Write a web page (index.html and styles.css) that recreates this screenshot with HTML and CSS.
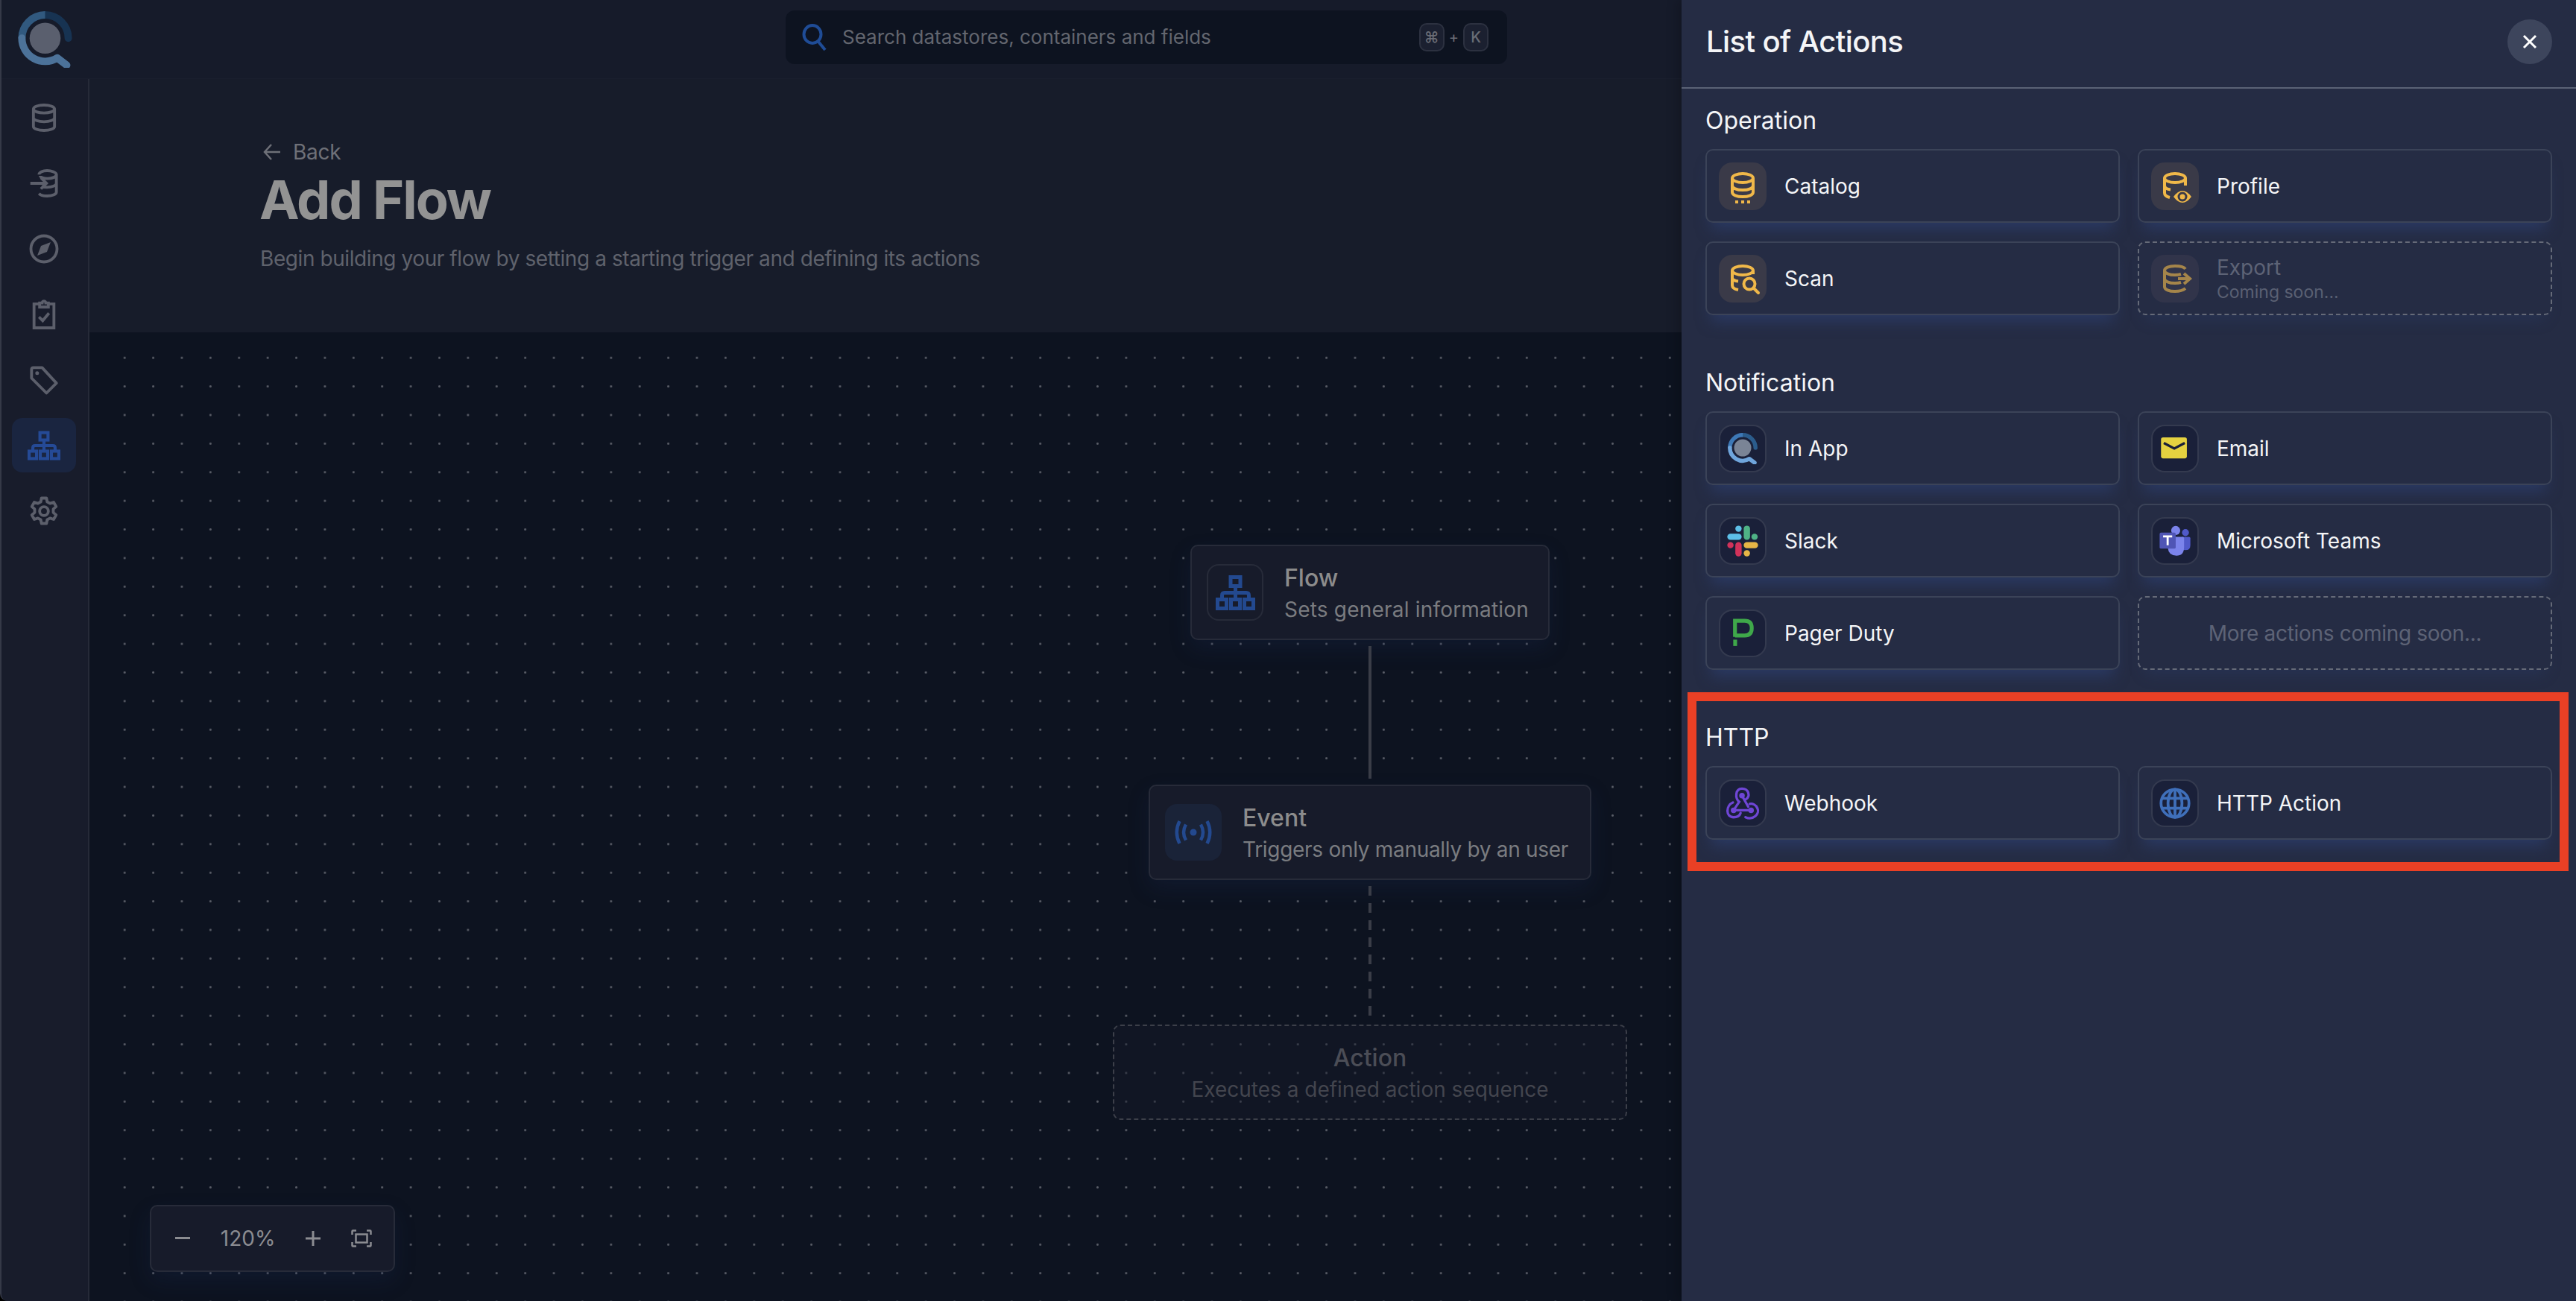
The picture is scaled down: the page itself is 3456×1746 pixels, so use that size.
FILE: index.html
```html
<!DOCTYPE html>
<html lang="en">
<head>
  <meta charset="UTF-8">
  <meta name="viewport" content="width=device-width, initial-scale=1.0">
  <title>Add Flow</title>
  <link rel="stylesheet" href="styles.css">
</head>
<body>

  <!-- shared icons -->
  <svg class="sprite">
    <symbol id="logo" viewBox="0 0 40 42">
      <circle cx="20" cy="20" r="11.5" fill="var(--logo-disc)"/>
      <path d="M20 2.8A17.2 17.2 0 0 1 37.2 20" fill="none" stroke="var(--logo-dark)" stroke-width="5.5" stroke-linecap="round"/>
      <path d="M20 2.8A17.2 17.2 0 0 0 2.8 20" fill="none" stroke="var(--logo-mid)" stroke-width="5.5"/>
      <path d="M2.8 20A17.2 17.2 0 0 0 29 34.7L36 40" fill="none" stroke="var(--logo-light)" stroke-width="5.5" stroke-linecap="round" stroke-linejoin="round"/>
    </symbol>
    <symbol id="sitemap" viewBox="0 0 53 47">
      <g fill="none" stroke="currentColor" stroke-width="5">
        <rect x="20" y="2.500" width="13" height="12"/>
        <rect x="2.500" y="32.500" width="12" height="12"/>
        <rect x="20.500" y="32.500" width="12" height="12"/>
        <rect x="38.500" y="32.500" width="12" height="12"/>
        <path d="M26.500 14V33M8.500 33V27q0-3.500 3.500-3.500H41q3.500 0 3.500 3.500V33"/>
      </g>
    </symbol>
  </svg>

  <div class="app">
    <div class="main">
      <header class="topbar">
        <div class="logo-cell">
          <svg class="logo logo-dim" width="73" height="76"><use href="#logo"/></svg>
        </div>
        <div class="search">
          <svg class="search-icon" width="34" height="36" viewBox="0 0 34 36" fill="none" stroke="currentColor" stroke-width="4">
            <ellipse cx="14" cy="14" rx="11.5" ry="12"/>
            <path d="M22 24L31 35"/>
          </svg>
          <span class="search-text">Search datastores, containers and fields</span>
          <span class="keys"><kbd>⌘</kbd><span class="key-plus">+</span><kbd>K</kbd></span>
        </div>
      </header>

      <div class="body-row">
        <nav class="sidebar">
          <a class="nav-item">
            <svg width="40" height="40" viewBox="0 0 24 24" fill="none" stroke="currentColor" stroke-width="2.3"><ellipse cx="12" cy="5" rx="8.5" ry="3.2"/><path d="M3.5 5V19c0 1.8 3.8 3.2 8.5 3.2s8.500-1.400 8.500-3.200V5M3.500 12c0 1.800 3.800 3.200 8.500 3.200s8.500-1.400 8.500-3.200"/></svg>
          </a>
          <a class="nav-item">
            <svg width="40" height="40" viewBox="0 0 24 24" fill="none" stroke="currentColor" stroke-width="2.300"><path d="M8 5c0-1.800 3-3.200 6.500-3.200S22 3.200 22 5s-3.500 3.200-7 3.200S9 7 9 6M22 5V19c0 1.800-3.500 3.200-7.500 3.200-3 0-5.500-.8-6.500-2M22 12c0 1.800-3.500 3.200-7.500 3.200-2 0-3.500-.3-4.500-.8M1 12H14M9.500 7.500L14 12l-4.500 4.500"/></svg>
          </a>
          <a class="nav-item">
            <svg width="40" height="40" viewBox="0 0 24 24" fill="none" stroke="currentColor" stroke-width="2.300"><circle cx="12" cy="12" r="10.500"/><path d="M16.500 7.500L14 14l-6.500 2.500L10 10z" fill="currentColor" stroke-width="1"/></svg>
          </a>
          <a class="nav-item">
            <svg width="40" height="40" viewBox="0 0 24 24" fill="none" stroke="currentColor" stroke-width="2.300"><path d="M8.500 3.500H4V22.800H20V3.500H15.500M8.500 2.800H10.500a1.500 1.500 0 0 1 3 0H15.500V6H8.500zM8 14l3 3 5-6"/></svg>
          </a>
          <a class="nav-item">
            <svg width="40" height="40" viewBox="0 0 24 24" fill="none" stroke="currentColor" stroke-width="2.300"><path d="M2 3.500Q2 2 3.500 2H10.500L22 14.500 14 22.500 2 10.500z" stroke-linejoin="round"/><circle cx="6.500" cy="6.500" r="1" fill="currentColor" stroke-width="1"/></svg>
          </a>
          <a class="nav-item nav-active">
            <svg width="44" height="40"><use href="#sitemap"/></svg>
          </a>
          <a class="nav-item">
            <svg width="40" height="40" viewBox="0 0 24 24" fill="none" stroke="currentColor" stroke-width="2.300" stroke-linejoin="round"><path d="M10 1.500h4l.6 3 2.300 1.300 2.900-1 2 3.500-2.300 2v2.800l2.300 2-2 3.500-2.900-1-2.300 1.300-.6 3h-4l-.6-3-2.300-1.300-2.900 1-2-3.500 2.300-2v-2.800l-2.300-2 2-3.500 2.900 1 2.300-1.300z"/><circle cx="12" cy="12" r="3.500"/></svg>
          </a>
        </nav>

        <div class="content">
          <section class="page-head">
            <a class="back">
              <svg width="24" height="24" viewBox="0 0 24 24" fill="none" stroke="currentColor" stroke-width="2.500"><path d="M23 12H2M11 2L2 12l9 10"/></svg>
              Back
            </a>
            <h1 class="page-title">Add Flow</h1>
            <p class="page-sub">Begin building your flow by setting a starting trigger and defining its actions</p>
          </section>

          <section class="canvas">
            <div class="diagram">
              <div class="node node-flow">
                <div class="node-icon node-icon-line">
                  <svg width="53" height="47"><use href="#sitemap"/></svg>
                </div>
                <div>
                  <div class="node-title">Flow</div>
                  <div class="node-sub">Sets general information</div>
                </div>
              </div>
              <div class="connector"></div>
              <div class="node node-event">
                <div class="node-icon">
                  <svg width="50" height="34" viewBox="0 0 50 34" fill="none" stroke="currentColor" stroke-width="4.500">
                    <circle cx="25" cy="17" r="4.500" fill="currentColor" stroke="none"/>
                    <path d="M15 6.500Q9 17 15 27.500M35 6.500Q41 17 35 27.500M6.500 2Q-1 17 6.500 32M43.500 2Q51 17 43.500 32"/>
                  </svg>
                </div>
                <div>
                  <div class="node-title">Event</div>
                  <div class="node-sub">Triggers only manually by an user</div>
                </div>
              </div>
              <div class="connector connector-dashed"></div>
              <div class="node node-action">
                <div class="node-title">Action</div>
                <div class="node-sub">Executes a defined action sequence</div>
              </div>
            </div>

            <div class="zoom-ctl">
              <svg width="20" height="4"><rect width="20" height="3" fill="currentColor"/></svg>
              <span class="zoom-value">120%</span>
              <svg width="20" height="20" viewBox="0 0 20 20" fill="currentColor"><rect y="8.500" width="20" height="3"/><rect x="8.500" width="3" height="20"/></svg>
              <svg width="28" height="24" viewBox="0 0 28 24" fill="none" stroke="currentColor" stroke-width="2.500"><path d="M1.500 7V2.500q0-1 1-1H7M21 1.500h4.500q1 0 1 1V7M26.500 17v4.500q0 1-1 1H21M7 22.500H2.500q-1 0-1-1V17"/><rect x="6.500" y="6.500" width="15" height="11"/></svg>
            </div>
          </section>
        </div>
      </div>
    </div>

    <aside class="drawer">
      <div class="drawer-head">
        <h2 class="drawer-title">List of Actions</h2>
        <button class="close-btn">
          <svg width="20" height="20" viewBox="0 0 20 20" stroke="currentColor" stroke-width="3"><path d="M2 2L18 18M18 2L2 18"/></svg>
        </button>
      </div>

      <div class="drawer-body">
        <section class="group">
          <h3 class="group-title">Operation</h3>
          <div class="cards">
            <div class="card">
              <div class="tile tile-op">
                <svg width="64" height="64" viewBox="0 0 64 64" fill="none" stroke="#f0b849" stroke-width="4">
                  <ellipse cx="32" cy="21" rx="14" ry="6"/>
                  <path d="M18 21V40c0 3.500 6 6 14 6s14-2.500 14-6V21M18 31c0 3.500 6 6 14 6s14-2.500 14-6"/>
                  <path d="M22 53h4M30 53h4M38 53h4"/>
                </svg>
              </div>
              <span class="card-label">Catalog</span>
            </div>
            <div class="card">
              <div class="tile tile-op">
                <svg width="64" height="64" viewBox="0 0 64 64" fill="none" stroke="#f0b849" stroke-width="4">
                  <ellipse cx="32" cy="21" rx="14" ry="6"/>
                  <path d="M18 21V41c0 3 3 5 7 6M18 31c0 3 3 5 8 5.500M46 21V31"/>
                  <path d="M30 46Q42 30 54 46 42 62 30 46z" fill="#f0b849" stroke="none"/>
                  <circle cx="42" cy="46" r="5" fill="#f0b849" stroke="#3a3a48" stroke-width="3"/>
                </svg>
              </div>
              <span class="card-label">Profile</span>
            </div>
            <div class="card">
              <div class="tile tile-op">
                <svg width="64" height="64" viewBox="0 0 64 64" fill="none" stroke="#f0b849" stroke-width="4">
                  <ellipse cx="32" cy="21" rx="14" ry="6"/>
                  <path d="M18 21V41c0 3 3 5 8 6M18 31c0 2 3 4 8 4.500M46 21V26"/>
                  <circle cx="41" cy="39" r="7.500"/>
                  <path d="M47 45L53 51" stroke-linecap="round"/>
                </svg>
              </div>
              <span class="card-label">Scan</span>
            </div>
            <div class="card card-soon">
              <div class="tile tile-op tile-off">
                <svg width="64" height="64" viewBox="0 0 64 64" fill="none" stroke="#a5854a" stroke-width="4">
                  <path d="M46 19C44 16 38 15 32 15 24 15 18 17.500 18 21V43c0 3.500 6 6 14 6 6 0 11-1.500 14-4M18 21c0 3.500 6 6 14 6 3 0 6-.4 8-1M18 32c0 3.500 6 6 14 6 3 0 6-.4 8-1"/>
                  <path d="M36 32H50M44 25l8 7-8 7"/>
                </svg>
              </div>
              <div>
                <div class="card-label">Export</div>
                <div class="card-note">Coming soon...</div>
              </div>
            </div>
          </div>
        </section>

        <section class="group">
          <h3 class="group-title">Notification</h3>
          <div class="cards">
            <div class="card">
              <div class="tile">
                <svg class="logo logo-bright" width="40" height="42"><use href="#logo"/></svg>
              </div>
              <span class="card-label">In App</span>
            </div>
            <div class="card">
              <div class="tile">
                <svg width="64" height="64" viewBox="0 0 64 64">
                  <rect x="12" y="16" width="37" height="30" rx="3" fill="#e5d240"/>
                  <path d="M16 24L31 32 46 24" fill="none" stroke="#1a2039" stroke-width="3.500"/>
                </svg>
              </div>
              <span class="card-label">Email</span>
            </div>
            <div class="card">
              <div class="tile">
                <svg width="60" height="60" viewBox="0 0 64 64" fill="none" stroke-width="9" stroke-linecap="round">
                  <path d="M14.500 26H26" stroke="#5dbfe8"/><circle cx="26" cy="14.500" r="4.500" fill="#5dbfe8"/>
                  <path d="M38 14.500V26" stroke="#4fb286"/><circle cx="49" cy="26" r="4.500" fill="#4fb286"/>
                  <path d="M38 38H49.500" stroke="#e6b546"/><circle cx="38" cy="49.500" r="4.500" fill="#e6b546"/>
                  <path d="M26 38V49.500" stroke="#d1325a"/><circle cx="14.500" cy="38" r="4.500" fill="#d1325a"/>
                </svg>
              </div>
              <span class="card-label">Slack</span>
            </div>
            <div class="card">
              <div class="tile">
                <svg width="60" height="60" viewBox="0 0 64 64">
                  <circle cx="33" cy="17" r="6.500" fill="#7b83eb"/>
                  <circle cx="47" cy="20" r="5" fill="#5059c9"/>
                  <path d="M42 26H52q2 0 2 2V38q0 7-7 7-3 0-5-1z" fill="#5059c9"/>
                  <path d="M22 26H43q2 0 2 2V41q0 12-11 12T22 43z" fill="#7b83eb"/>
                  <rect x="10" y="20" width="23" height="23" rx="2" fill="#4f55b5"/>
                  <path d="M15 25.500H28M21.500 25.500V38" stroke="#fff" stroke-width="3" fill="none"/>
                </svg>
              </div>
              <span class="card-label">Microsoft Teams</span>
            </div>
            <div class="card">
              <div class="tile">
                <svg width="60" height="60" viewBox="0 0 64 64" fill="none" stroke="#3fa84a" stroke-width="5.500">
                  <path d="M21 37V14H35C42 14 45 18 45 24.500S42 35 35 35H21"/>
                  <rect x="18.500" y="41" width="5.500" height="9" fill="#3fa84a" stroke="none"/>
                </svg>
              </div>
              <span class="card-label">Pager Duty</span>
            </div>
            <div class="card card-soon card-more">More actions coming soon...</div>
          </div>
        </section>

        <section class="group">
          <h3 class="group-title">HTTP</h3>
          <div class="cards">
            <div class="card">
              <div class="tile">
                <svg width="60" height="60" viewBox="0 0 64 64" fill="none" stroke="#6f46d6" stroke-width="3.500" stroke-linecap="round">
                  <circle cx="31" cy="21" r="4" fill="#6f46d6" stroke="none"/>
                  <circle cx="19" cy="42" r="4" fill="#6f46d6" stroke="none"/>
                  <circle cx="44" cy="42" r="4" fill="#6f46d6" stroke="none"/>
                  <path d="M19 42L27 30C21 25 21 11 31 11 41 11 43 22 37 26M31 21L40 37M19 42H44"/>
                  <path d="M18 31C8 35 7 52 19 52 25 52 28 49 29 46M36 52C47 57 57 47 53 39 51 34 46 32 42 33"/>
                </svg>
              </div>
              <span class="card-label">Webhook</span>
            </div>
            <div class="card">
              <div class="tile">
                <svg width="60" height="60" viewBox="0 0 64 64" fill="none" stroke="#3f6fba" stroke-width="4">
                  <circle cx="32" cy="32" r="20"/>
                  <ellipse cx="32" cy="32" rx="10" ry="20"/>
                  <path d="M32 12V52M13 25H51M13 39H51"/>
                </svg>
              </div>
              <span class="card-label">HTTP Action</span>
            </div>
          </div>
        </section>
      </div>

      <!-- annotation from the screenshot -->
      <div class="highlight"></div>
    </aside>
  </div>

</body>
</html>
```

FILE: styles.css
```css
* {
  box-sizing: border-box;
}

body {
  margin: 0;
  background: #000;
  font-family: Inter, "Noto Sans", sans-serif;
  overflow: hidden;
}

.sprite {
  display: none;
}

.app {
  display: flex;
  height: 100vh;
}

.main {
  flex: 1;
  min-width: 0;
  display: flex;
  flex-direction: column;
  background: #171c2a;
  border-left: 2px solid #353947;
  border-bottom-left-radius: 10px;
  overflow: hidden;
}

/* top bar */
.topbar {
  height: 106px;
  flex: none;
  display: flex;
  align-items: center;
  background: #161b2a;
  border-bottom: 1px solid #1a1f2e;
}

.logo-cell {
  width: 118px;
  flex: none;
  padding-left: 22px;
  display: flex;
}

.logo-dim {
  --logo-disc: #5a5f6e;
  --logo-dark: #173352;
  --logo-mid: #31597f;
  --logo-light: #4c7299;
}

.logo-bright {
  --logo-disc: #7a8496;
  --logo-dark: #2b5c8c;
  --logo-mid: #3d78b6;
  --logo-light: #6fa5dc;
}

.search {
  width: 968px;
  height: 72px;
  margin: 0 0 6px 934px;
  padding: 0 25px 0 22px;
  display: flex;
  align-items: center;
  background: #0d1320;
  border-radius: 12px;
}

.search-icon {
  color: #1f4c96;
  flex: none;
}

.search-text {
  margin-left: 20px;
  font-size: 26px;
  color: #63666f;
}

.keys {
  margin-left: auto;
  display: flex;
  align-items: center;
  gap: 6px;
  color: #6a6d76;
}

.keys kbd {
  width: 34px;
  height: 38px;
  display: flex;
  align-items: center;
  justify-content: center;
  font-family: Inter, "DejaVu Sans", sans-serif;
  font-size: 20px;
  font-weight: 500;
  background: #1b2030;
  border: 2px solid #2c3140;
  border-radius: 10px;
}

.key-plus {
  font-size: 20px;
}

/* left nav */
.body-row {
  flex: 1;
  min-height: 0;
  display: flex;
}

.sidebar {
  width: 118px;
  flex: none;
  padding: 15px 0 0 14px;
  display: flex;
  flex-direction: column;
  gap: 15px;
  background: #181c2b;
  border-right: 2px solid #262a38;
}

.nav-item {
  width: 86px;
  height: 73px;
  display: flex;
  align-items: center;
  justify-content: center;
  color: #5c5f6b;
  border-radius: 14px;
}

.nav-active {
  color: #254a96;
  background: #1a2540;
}

/* page header */
.content {
  flex: 1;
  min-width: 0;
  display: flex;
  flex-direction: column;
}

.page-head {
  height: 340px;
  flex: none;
  padding: 80px 0 0 229px;
  background: #171c2a;
}

.back {
  height: 36px;
  display: flex;
  align-items: center;
  gap: 16px;
  padding-left: 4px;
  font-size: 28px;
  line-height: 36px;
  letter-spacing: -0.3px;
  color: #6e7078;
}

.page-title {
  margin: 6px 0 0 -1px;
  font-size: 72px;
  line-height: 80px;
  font-weight: 700;
  letter-spacing: -2px;
  color: #939393;
}

.page-sub {
  margin: 21px 0 0;
  font-size: 28px;
  line-height: 36px;
  letter-spacing: -0.42px;
  color: #5f626c;
}

/* flow canvas: the dot grid starts inside the padding, not at the edge */
.canvas {
  flex: 1;
  position: relative;
  padding: 15px 0 0 28px;
  background-image: radial-gradient(circle, #585c66 1.2px, transparent 1.7px), linear-gradient(#0d1320, #0d1320);
  background-size: 38.4px 38.4px, auto;
  background-origin: content-box, border-box;
  background-clip: content-box, border-box;
}

.diagram {
  position: absolute;
  left: 1373px;
  top: 285px;
  width: 690px;
  display: flex;
  flex-direction: column;
  align-items: center;
}

.node {
  height: 128px;
  display: flex;
  align-items: center;
  gap: 28px;
  padding-left: 20px;
  background: #171b2a;
  border: 2px solid #272b39;
  border-radius: 10px;
  box-shadow: 0 12px 28px rgba(28, 44, 90, 0.22);
}

.node-flow {
  width: 482px;
}

.node-event {
  width: 594px;
}

.node-action {
  width: 690px;
  padding-left: 0;
  flex-direction: column;
  justify-content: center;
  gap: 0;
  background: rgba(23, 27, 42, 0.45);
  border: 2px dashed #3c3f49;
  box-shadow: none;
}

.node-icon {
  width: 76px;
  height: 76px;
  flex: none;
  display: flex;
  align-items: center;
  justify-content: center;
  color: #23498f;
  background: #1a2338;
  border-radius: 16px;
}

.node-icon-line {
  background: none;
  border: 2px solid #272b39;
}

.node-title {
  margin-top: 3px;
  font-size: 32px;
  line-height: 42px;
  font-weight: 500;
  color: #8c8c8c;
}

.node-sub {
  font-size: 28px;
  line-height: 42px;
  color: #7a7c80;
}

.node-flow .node-sub {
  letter-spacing: 0.2px;
}

.node-event .node-sub {
  letter-spacing: -0.3px;
}

.node-action .node-title {
  color: #4b4d56;
}

.node-action .node-sub {
  color: #43454e;
}

.connector {
  width: 4px;
  height: 178px;
  margin: 8px 0;
  flex: none;
  background: #3a3d47;
}

.connector-dashed {
  background: repeating-linear-gradient(to bottom, #3a3d47 0, #3a3d47 13px, transparent 13px, transparent 23px);
}

.zoom-ctl {
  position: absolute;
  left: 81px;
  top: 1171px;
  width: 329px;
  height: 90px;
  padding: 0 29px 0 32px;
  display: flex;
  align-items: center;
  justify-content: space-between;
  color: #8b8c91;
  background: #171b2a;
  border: 2px solid #272b39;
  border-radius: 10px;
  box-shadow: 0 12px 28px rgba(28, 44, 90, 0.22);
}

.zoom-value {
  font-size: 28px;
}

/* right drawer */
.drawer {
  width: 1200px;
  flex: none;
  position: relative;
  background: #252c44;
  box-shadow: -6px 0 14px rgba(0, 0, 0, 0.18);
}

.drawer-head {
  height: 119px;
  padding: 0 32px 6px 33px;
  display: flex;
  align-items: center;
  justify-content: space-between;
  border-bottom: 2px solid #5a6276;
}

.drawer-title {
  margin: 0;
  font-size: 40px;
  font-weight: 500;
  letter-spacing: -0.6px;
  color: #f4f5f7;
}

.close-btn {
  width: 60px;
  height: 60px;
  padding: 0;
  display: flex;
  align-items: center;
  justify-content: center;
  color: #fff;
  background: #3d455c;
  border: none;
  border-radius: 50%;
}

.drawer-body {
  padding: 17px 32px 0;
  display: flex;
  flex-direction: column;
  gap: 65px;
}

.group-title {
  margin: 0 0 16px;
  padding-top: 2px;
  height: 48px;
  font-size: 32px;
  line-height: 48px;
  font-weight: 400;
  color: #f4f5f7;
}

.cards {
  display: grid;
  grid-template-columns: 556px 556px;
  grid-auto-rows: 99px;
  gap: 25px 24px;
}

.card {
  display: flex;
  align-items: center;
  gap: 24px;
  padding-left: 16px;
  border: 2px solid #3b4358;
  border-radius: 10px;
  background: #252c44;
  box-shadow: 0 16px 20px -8px rgba(48, 70, 125, 0.55);
}

.card-soon {
  border: 2px dashed #656a78;
  box-shadow: 0 14px 20px -10px rgba(48, 70, 125, 0.3);
}

.card-more {
  justify-content: center;
  padding-left: 0;
  font-size: 28px;
  letter-spacing: -0.3px;
  color: #5d6376;
}

.tile {
  width: 64px;
  height: 64px;
  flex: none;
  display: flex;
  align-items: center;
  justify-content: center;
  background: #1a2039;
  border: 2px solid #343a4f;
  border-radius: 18px;
  overflow: hidden;
}

.tile-op {
  background: #3a3a48;
  border: none;
}

.tile-off {
  background: #31344a;
}

.card-label {
  font-size: 28px;
  line-height: 36px;
  font-weight: 400;
  color: #f4f5f7;
}

.card-soon .card-label {
  color: #5d6376;
}

.card-note {
  font-size: 23px;
  line-height: 30px;
  color: #5a6073;
}

.highlight {
  position: absolute;
  left: 8px;
  top: 929px;
  width: 1182px;
  height: 240px;
  border: 12px solid #ea4025;
  pointer-events: none;
}
```
